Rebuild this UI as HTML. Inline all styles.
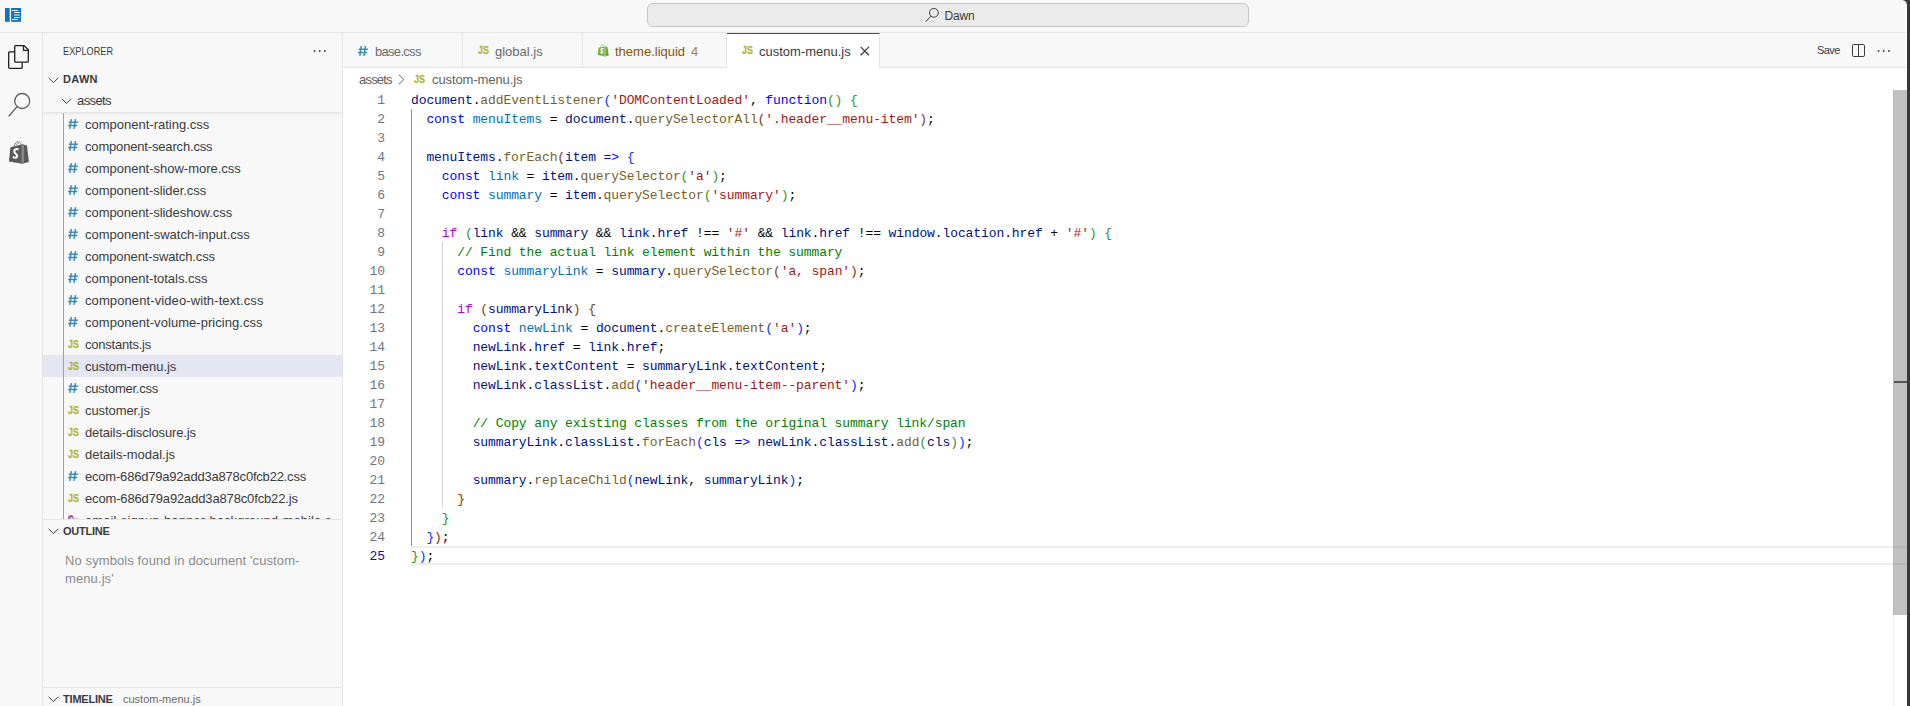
<!DOCTYPE html>
<html><head><meta charset="utf-8"><title>Dawn</title>
<style>
*{box-sizing:border-box;margin:0;padding:0}
html,body{width:1910px;height:706px;overflow:hidden;background:#f8f8f8}
body{position:relative;font-family:"Liberation Sans",sans-serif;font-size:13px;color:#3b3b3b}
.abs{position:absolute}
/* title bar */
#title{position:absolute;left:0;top:0;width:1907px;height:33px;border-bottom:1px solid #e5e5e5;background:#f8f8f8}
#cc{position:absolute;left:647px;top:3px;width:602px;height:24px;border:1px solid #c6c6c6;border-radius:6px;background:#ebebeb}
#cc .t{position:absolute;left:296.4px;top:0;line-height:24px;font-size:12px;color:#3b3b3b;letter-spacing:-0.1px}
#strip{position:absolute;left:1907px;top:0;width:3px;height:706px;background:#383838}
/* activity bar */
#act{position:absolute;left:0;top:33px;width:43px;height:673px;border-right:1px solid #e5e5e5;background:#f8f8f8}
/* sidebar */
#side{position:absolute;left:43px;top:33px;width:300px;height:673px;border-right:1px solid #e5e5e5;background:#f8f8f8;overflow:hidden}
#side .hd{position:absolute;left:20px;top:1px;line-height:35px;font-size:11px;color:#3b3b3b}
.sect{position:absolute;left:0;width:299px;height:22px;line-height:22px;font-size:11px;font-weight:bold;color:#3b3b3b}
.sect .lbl{position:absolute;left:20px;top:1px}
.row{position:absolute;left:0;width:299px;height:22px;line-height:22px;white-space:nowrap}
.row.sel{background:#e4e6f1}
.row .fn{position:absolute;left:42px;top:1px;color:#3b3b3b}
.fi{position:absolute;left:25.2px;top:6px;width:10px;height:10px}
.fjs{position:absolute;left:24.5px;top:0;font-size:11.2px;font-weight:bold;color:#b5b53a;-webkit-text-stroke:0.3px #b5b53a;transform:scaleX(.8);transform-origin:0 50%}
#guide{z-index:3;position:absolute;left:20px;top:80px;width:1px;height:406px;background:#a2a2a2}
/* editor */
#ed{position:absolute;left:343px;top:33px;width:1564px;height:673px;background:#fff}
#tabs{position:absolute;left:0;top:0;width:1564px;height:35px;background:#f8f8f8;border-bottom:1px solid #e5e5e5}
.tab{position:absolute;top:0;height:35px;border-right:1px solid #e5e5e5;line-height:35px;color:#6b6b6b;white-space:nowrap}
.tab.on{background:#fff;border-top:1px solid #005fb8;color:#3b3b3b;height:35px;line-height:33px}
.tab .tx{position:absolute;top:1px}
.tab .fi{left:15.3px;top:13px}
.tab .fjs{left:15px}
.fshop{position:absolute;left:13.6px;top:11.2px;width:12.6px;height:13px}
#bc{position:absolute;left:0;top:35px;width:1564px;height:22px;line-height:22px;color:#616161;background:#fff}
/* code */
.ln{position:absolute;left:411px;height:19px;line-height:19px;white-space:pre;font-family:"Liberation Mono",monospace;font-size:13px;letter-spacing:-0.1px;color:#000;padding-top:1px}
.num{position:absolute;left:343px;width:42px;text-align:right;height:19px;line-height:19px;font-family:"Liberation Mono",monospace;font-size:13px;letter-spacing:-0.1px;color:#6e7681;padding-top:1px}
.num.act{color:#171184}
.v{color:#001080}.f{color:#795e26}.s{color:#a31515}.k{color:#0000ff}.c{color:#0070c1}.kc{color:#af00db}.cm{color:#008000}
.b1{color:#0431fa}.b2{color:#319331}.b3{color:#7b3814}
.ig{position:absolute;width:1px;background:#d3d3d3}
</style></head>
<body>
<div id="title">
  <svg class="abs" style="left:5px;top:8px" width="16" height="14" viewBox="0 0 16 14"><rect x="0" y="0" width="4.7" height="13.8" fill="#1272bf"/><rect x="6.1" y="0" width="9.9" height="13.8" fill="#1272bf"/><path d="M7.1 2.5h5.8M9.1 4.5h5.7M9.1 9.5h5.7M7.1 11.5h5.8" stroke="#fff" stroke-width="1"/><rect x="9.1" y="6.1" width="5.7" height="1.8" fill="#8fc0e6"/></svg>
  <div id="cc">
    <svg class="abs" style="left:276px;top:3px" width="16" height="16" viewBox="0 0 16 16"><circle cx="9.9" cy="5.8" r="4.4" fill="none" stroke="#3b3b3b" stroke-width="1"/><path d="M6.8 9.2 1.7 14.8" stroke="#3b3b3b" stroke-width="1"/></svg>
    <div class="t">Dawn</div>
  </div>
</div>
<div id="strip"></div>
<div class="abs" style="left:1906px;top:4px;width:1px;height:86px;background:#fff;z-index:5"></div>
<div class="abs" style="left:1903px;top:0;width:4px;height:4px;z-index:6;background:radial-gradient(circle at 0 100%,rgba(56,56,56,0) 3.2px,#383838 4px)"></div>

<div id="act">
  <svg class="abs" style="left:0;top:0" width="42" height="150" viewBox="0 33 42 150">
    <g fill="none" stroke="#1f1f1f" stroke-width="1.3" stroke-linejoin="round">
      <path d="M15.6 45.6H24.2L28.3 49.8V61.3a.9.9 0 0 1-.9.9H15.6a.9.9 0 0 1-.9-.9V46.5a.9.9 0 0 1 .9-.9z"/>
      <path d="M23.5 45.8V50.3H28.2"/>
      <path d="M14.6 51.8H9.6a.9.9 0 0 0-.9.9V67.4a.9.9 0 0 0 .9.9H21.3a.9.9 0 0 0 .9-.9V62.4"/>
    </g>
    <g fill="none" stroke="#616161" stroke-width="1.3">
      <circle cx="22.2" cy="101" r="7.5"/>
      <path d="M17 106.7 8.7 116.3"/>
    </g>
    <g>
      <path d="M10.4 147.2 22.2 144.2 22.2 163.8 9 161.4z" fill="#5a5a5a"/>
      <path d="M22.2 144.2 27 145.4 28.9 162 22.2 163.8z" fill="#5a5a5a"/>
      <rect x="21.6" y="144.4" width="2.3" height="19.2" fill="#8a8a8a"/>
      <path d="M14.2 146.4C14.8 143.4 16.4 141.5 18 141.7 19.7 141.9 21 143.4 21.3 144.6" stroke="#707070" stroke-width="0.9" fill="none"/>
      <path d="M16.2 145.8C16.7 143.9 17.7 143 18.9 143.5" stroke="#808080" stroke-width="0.8" fill="none"/>
      <path d="M18.6 149.6C17 148.6 14.4 149 14.2 151.2 14 153.6 17.4 153.8 17.2 156.2 17 158.2 14.6 158 12.8 156.8" stroke="#fff" stroke-width="2.1" fill="none"/>
    </g>
  </svg>
</div>

<div id="side">
  <div class="hd" style="transform:scaleX(.835);transform-origin:0 50%">EXPLORER</div>
  <svg class="abs" style="left:270px;top:16px" width="14" height="4" viewBox="0 0 14 4"><rect x="0.7" y="1.2" width="1.6" height="1.6" fill="#2b2b2b"/><rect x="5.9" y="1.2" width="1.6" height="1.6" fill="#2b2b2b"/><rect x="11.1" y="1.2" width="1.6" height="1.6" fill="#2b2b2b"/></svg>
  <div id="list" class="abs" style="left:0;top:0;width:299px;height:486px;overflow:hidden">
    <div id="guide"></div>
<div class="row" style="top:80px"><svg class="fi" viewBox="0 0 10 10"><path d="M3.3 0.2 1.8 9.8M7.5 0.2 6 9.8M0.8 3.3h9.1M0.1 6.4h9.1" stroke="#3f8db3" stroke-width="1.55" fill="none"/></svg><span class="fn" style="letter-spacing:0.001px">component-rating.css</span></div>
<div class="row" style="top:102px"><svg class="fi" viewBox="0 0 10 10"><path d="M3.3 0.2 1.8 9.8M7.5 0.2 6 9.8M0.8 3.3h9.1M0.1 6.4h9.1" stroke="#3f8db3" stroke-width="1.55" fill="none"/></svg><span class="fn" style="letter-spacing:-0.169px">component-search.css</span></div>
<div class="row" style="top:124px"><svg class="fi" viewBox="0 0 10 10"><path d="M3.3 0.2 1.8 9.8M7.5 0.2 6 9.8M0.8 3.3h9.1M0.1 6.4h9.1" stroke="#3f8db3" stroke-width="1.55" fill="none"/></svg><span class="fn" style="letter-spacing:-0.011px">component-show-more.css</span></div>
<div class="row" style="top:146px"><svg class="fi" viewBox="0 0 10 10"><path d="M3.3 0.2 1.8 9.8M7.5 0.2 6 9.8M0.8 3.3h9.1M0.1 6.4h9.1" stroke="#3f8db3" stroke-width="1.55" fill="none"/></svg><span class="fn" style="letter-spacing:-0.046px">component-slider.css</span></div>
<div class="row" style="top:168px"><svg class="fi" viewBox="0 0 10 10"><path d="M3.3 0.2 1.8 9.8M7.5 0.2 6 9.8M0.8 3.3h9.1M0.1 6.4h9.1" stroke="#3f8db3" stroke-width="1.55" fill="none"/></svg><span class="fn" style="letter-spacing:-0.045px">component-slideshow.css</span></div>
<div class="row" style="top:190px"><svg class="fi" viewBox="0 0 10 10"><path d="M3.3 0.2 1.8 9.8M7.5 0.2 6 9.8M0.8 3.3h9.1M0.1 6.4h9.1" stroke="#3f8db3" stroke-width="1.55" fill="none"/></svg><span class="fn" style="letter-spacing:0.002px">component-swatch-input.css</span></div>
<div class="row" style="top:212px"><svg class="fi" viewBox="0 0 10 10"><path d="M3.3 0.2 1.8 9.8M7.5 0.2 6 9.8M0.8 3.3h9.1M0.1 6.4h9.1" stroke="#3f8db3" stroke-width="1.55" fill="none"/></svg><span class="fn" style="letter-spacing:-0.112px">component-swatch.css</span></div>
<div class="row" style="top:234px"><svg class="fi" viewBox="0 0 10 10"><path d="M3.3 0.2 1.8 9.8M7.5 0.2 6 9.8M0.8 3.3h9.1M0.1 6.4h9.1" stroke="#3f8db3" stroke-width="1.55" fill="none"/></svg><span class="fn" style="letter-spacing:-0.022px">component-totals.css</span></div>
<div class="row" style="top:256px"><svg class="fi" viewBox="0 0 10 10"><path d="M3.3 0.2 1.8 9.8M7.5 0.2 6 9.8M0.8 3.3h9.1M0.1 6.4h9.1" stroke="#3f8db3" stroke-width="1.55" fill="none"/></svg><span class="fn" style="letter-spacing:0.101px">component-video-with-text.css</span></div>
<div class="row" style="top:278px"><svg class="fi" viewBox="0 0 10 10"><path d="M3.3 0.2 1.8 9.8M7.5 0.2 6 9.8M0.8 3.3h9.1M0.1 6.4h9.1" stroke="#3f8db3" stroke-width="1.55" fill="none"/></svg><span class="fn" style="letter-spacing:0.047px">component-volume-pricing.css</span></div>
<div class="row" style="top:300px"><span class="fjs">JS</span><span class="fn" style="letter-spacing:-0.221px">constants.js</span></div>
<div class="row sel" style="top:322px"><span class="fjs">JS</span><span class="fn" style="letter-spacing:-0.032px">custom-menu.js</span></div>
<div class="row" style="top:344px"><svg class="fi" viewBox="0 0 10 10"><path d="M3.3 0.2 1.8 9.8M7.5 0.2 6 9.8M0.8 3.3h9.1M0.1 6.4h9.1" stroke="#3f8db3" stroke-width="1.55" fill="none"/></svg><span class="fn" style="letter-spacing:-0.238px">customer.css</span></div>
<div class="row" style="top:366px"><span class="fjs">JS</span><span class="fn" style="letter-spacing:-0.086px">customer.js</span></div>
<div class="row" style="top:388px"><span class="fjs">JS</span><span class="fn" style="letter-spacing:-0.116px">details-disclosure.js</span></div>
<div class="row" style="top:410px"><span class="fjs">JS</span><span class="fn" style="letter-spacing:-0.021px">details-modal.js</span></div>
<div class="row" style="top:432px"><svg class="fi" viewBox="0 0 10 10"><path d="M3.3 0.2 1.8 9.8M7.5 0.2 6 9.8M0.8 3.3h9.1M0.1 6.4h9.1" stroke="#3f8db3" stroke-width="1.55" fill="none"/></svg><span class="fn ecom" style="letter-spacing:-0.202px">ecom-686d79a92add3a878c0fcb22.css</span></div>
<div class="row" style="top:454px"><span class="fjs">JS</span><span class="fn ecom" style="letter-spacing:-0.149px">ecom-686d79a92add3a878c0fcb22.js</span></div>
<div class="row" style="top:476px"><svg class="fi" viewBox="0 0 12 12"><rect x="4.5" y="3.2" width="7.6" height="4" fill="#d9c3e6"/><circle cx="3.4" cy="3.4" r="3.3" fill="#9a5cc0"/><circle cx="4.2" cy="4.6" r="1.6" fill="#f8f8f8"/></svg><span class="fn" style="letter-spacing:0.077px">email-signup-banner-background-mobile.s</span></div>
  </div>
  <!-- sticky headers -->
  <div class="sect" style="top:35px;background:#f8f8f8">
    <svg class="abs" style="left:5px;top:9px" width="11" height="7" viewBox="0 0 11 7"><path d="M0.7 0.8 5.5 5.6 10.3 0.8" fill="none" stroke="#3b3b3b" stroke-width="1"/></svg>
    <span class="lbl" style="top:0;letter-spacing:0.3px">DAWN</span>
  </div>
  <div class="row" style="top:57px;background:#f8f8f8;box-shadow:0 2px 3px -1px rgba(0,0,0,.12)">
    <svg class="abs" style="left:18px;top:8px" width="11" height="7" viewBox="0 0 11 7"><path d="M0.7 0.8 5.5 5.6 10.3 0.8" fill="none" stroke="#3b3b3b" stroke-width="1"/></svg>
    <span class="abs" style="left:34px;top:0;letter-spacing:-0.6px">assets</span>
  </div>
  <div class="sect" style="top:486px;height:23px;border-top:1px solid #e5e5e5;background:#f8f8f8">
    <svg class="abs" style="left:5px;top:8px" width="11" height="7" viewBox="0 0 11 7"><path d="M0.7 0.8 5.5 5.6 10.3 0.8" fill="none" stroke="#3b3b3b" stroke-width="1"/></svg>
    <span class="lbl" style="top:0;letter-spacing:-0.25px">OUTLINE</span>
  </div>
  <div class="abs" style="left:22px;top:519px;width:250px;line-height:18px;color:#8b8b8b;letter-spacing:0.1px">No symbols found in document 'custom-<br>menu.js'</div>
  <div class="sect" style="top:654px;height:23px;border-top:1px solid #e5e5e5;background:#f8f8f8">
    <svg class="abs" style="left:5px;top:8px" width="11" height="7" viewBox="0 0 11 7"><path d="M0.7 0.8 5.5 5.6 10.3 0.8" fill="none" stroke="#3b3b3b" stroke-width="1"/></svg>
    <span class="lbl" style="top:0;letter-spacing:-0.2px">TIMELINE</span>
    <span class="abs" style="left:80px;top:0;font-weight:normal;color:#6b6b6b">custom-menu.js</span>
  </div>
</div>

<div id="ed">
  <div id="tabs">
    <div class="tab" style="left:0;width:120px"><svg class="fi" viewBox="0 0 10 10"><path d="M3.3 0.2 1.8 9.8M7.5 0.2 6 9.8M0.8 3.3h9.1M0.1 6.4h9.1" stroke="#3f8db3" stroke-width="1.55" fill="none"/></svg><span class="tx" style="left:32px;letter-spacing:-0.7px">base.css</span></div>
    <div class="tab" style="left:120px;width:120px"><span class="fjs">JS</span><span class="tx" style="left:32px">global.js</span></div>
    <div class="tab" style="left:240px;width:144px;color:#895503"><svg class="fshop" viewBox="0 0 14 15"><path d="M1.6 4.2 9.2 2.6 9.2 14.4 0.4 12.8z" fill="#7db343"/><path d="M9.2 2.6 11.6 3.3 13.4 13.4 9.2 14.4z" fill="#6aa23c"/><path d="M8.9 2.8v11.5" stroke="#d8ecc0" stroke-width="0.7"/><path d="M3.6 3.9C3.9 2 4.9 0.9 6 0.9 7 0.9 7.6 1.9 7.7 3.1" stroke="#8cc152" stroke-width="0.9" fill="none"/><path d="M7.4 5.6C6.3 5 4.5 5.2 4.4 6.7 4.3 8.2 6.5 8.2 6.4 9.7 6.3 10.8 4.8 10.7 3.7 9.9" stroke="#fff" stroke-width="1.5" fill="none"/></svg><span class="tx" style="left:32px">theme.liquid</span><span class="tx" style="left:108px;opacity:.75">4</span></div>
    <div class="tab on" style="left:384px;width:153px"><span class="fjs">JS</span><span class="tx" style="left:32px">custom-menu.js</span>
      <svg class="abs" style="left:133px;top:12px" width="10" height="10" viewBox="0 0 10 10"><path d="M0.6 0.9 9 9.3M9 0.9 0.6 9.3" stroke="#3b3b3b" stroke-width="1.25"/></svg>
    </div>
    <div class="abs" style="left:1474px;top:0;line-height:35px;font-size:11px;color:#3b3b3b;letter-spacing:-0.6px">Save</div>
    <svg class="abs" style="left:1509px;top:11px" width="13" height="13" viewBox="0 0 13 13"><rect x="0.5" y="0.5" width="12" height="12" rx="1.3" fill="none" stroke="#3b3b3b" stroke-width="1"/><path d="M6.5 0.5v12" stroke="#3b3b3b" stroke-width="1"/></svg>
    <svg class="abs" style="left:1534px;top:16px" width="14" height="4" viewBox="0 0 14 4"><rect x="0.7" y="1.2" width="1.6" height="1.6" fill="#2b2b2b"/><rect x="5.9" y="1.2" width="1.6" height="1.6" fill="#2b2b2b"/><rect x="11.1" y="1.2" width="1.6" height="1.6" fill="#2b2b2b"/></svg>
  </div>
  <div id="bc">
    <span class="abs" style="left:16px;top:1px;letter-spacing:-0.8px">assets</span>
    <svg class="abs" style="left:55px;top:6px" width="7" height="11" viewBox="0 0 7 11"><path d="M1 0.8 5.8 5.5 1 10.2" fill="none" stroke="#616161" stroke-width="1"/></svg>
    <span class="fjs" style="left:71px">JS</span>
    <span class="abs" style="left:89px;top:1px;letter-spacing:-0.1px">custom-menu.js</span>
  </div>
</div>

<!-- code area: absolute page coords -->
<div class="abs" style="left:411px;top:546px;width:1496px;height:19px;border:2px solid #eee;border-left-width:1px;border-right:0"></div>
<div class="ig" style="left:411px;top:109px;height:437px;background:#939393"></div>
<div class="ig" style="left:442px;top:242px;height:266px"></div>
<div class="num" style="top:90px">1</div>
<div class="num" style="top:109px">2</div>
<div class="num" style="top:128px">3</div>
<div class="num" style="top:147px">4</div>
<div class="num" style="top:166px">5</div>
<div class="num" style="top:185px">6</div>
<div class="num" style="top:204px">7</div>
<div class="num" style="top:223px">8</div>
<div class="num" style="top:242px">9</div>
<div class="num" style="top:261px">10</div>
<div class="num" style="top:280px">11</div>
<div class="num" style="top:299px">12</div>
<div class="num" style="top:318px">13</div>
<div class="num" style="top:337px">14</div>
<div class="num" style="top:356px">15</div>
<div class="num" style="top:375px">16</div>
<div class="num" style="top:394px">17</div>
<div class="num" style="top:413px">18</div>
<div class="num" style="top:432px">19</div>
<div class="num" style="top:451px">20</div>
<div class="num" style="top:470px">21</div>
<div class="num" style="top:489px">22</div>
<div class="num" style="top:508px">23</div>
<div class="num" style="top:527px">24</div>
<div class="num act" style="top:546px">25</div>
<div class="ln" style="top:90px"><span class="v">document</span>.<span class="f">addEventListener</span><span class="b1">(</span><span class="s">&#x27;DOMContentLoaded&#x27;</span>, <span class="k">function</span><span class="b2">()</span> <span class="b2">{</span></div>
<div class="ln" style="top:109px">  <span class="k">const</span> <span class="c">menuItems</span> = <span class="v">document</span>.<span class="f">querySelectorAll</span><span class="b3">(</span><span class="s">&#x27;.header__menu-item&#x27;</span><span class="b3">)</span>;</div>
<div class="ln" style="top:128px"></div>
<div class="ln" style="top:147px">  <span class="v">menuItems</span>.<span class="f">forEach</span><span class="b3">(</span><span class="v">item</span> <span class="k">=&gt;</span> <span class="b1">{</span></div>
<div class="ln" style="top:166px">    <span class="k">const</span> <span class="c">link</span> = <span class="v">item</span>.<span class="f">querySelector</span><span class="b2">(</span><span class="s">&#x27;a&#x27;</span><span class="b2">)</span>;</div>
<div class="ln" style="top:185px">    <span class="k">const</span> <span class="c">summary</span> = <span class="v">item</span>.<span class="f">querySelector</span><span class="b2">(</span><span class="s">&#x27;summary&#x27;</span><span class="b2">)</span>;</div>
<div class="ln" style="top:204px"></div>
<div class="ln" style="top:223px">    <span class="kc">if</span> <span class="b2">(</span><span class="v">link</span> &amp;&amp; <span class="v">summary</span> &amp;&amp; <span class="v">link</span>.<span class="v">href</span> !== <span class="s">&#x27;#&#x27;</span> &amp;&amp; <span class="v">link</span>.<span class="v">href</span> !== <span class="v">window</span>.<span class="v">location</span>.<span class="v">href</span> + <span class="s">&#x27;#&#x27;</span><span class="b2">)</span> <span class="b2">{</span></div>
<div class="ln" style="top:242px">      <span class="cm">// Find the actual link element within the summary</span></div>
<div class="ln" style="top:261px">      <span class="k">const</span> <span class="c">summaryLink</span> = <span class="v">summary</span>.<span class="f">querySelector</span><span class="b3">(</span><span class="s">&#x27;a, span&#x27;</span><span class="b3">)</span>;</div>
<div class="ln" style="top:280px"></div>
<div class="ln" style="top:299px">      <span class="kc">if</span> <span class="b3">(</span><span class="v">summaryLink</span><span class="b3">)</span> <span class="b3">{</span></div>
<div class="ln" style="top:318px">        <span class="k">const</span> <span class="c">newLink</span> = <span class="v">document</span>.<span class="f">createElement</span><span class="b1">(</span><span class="s">&#x27;a&#x27;</span><span class="b1">)</span>;</div>
<div class="ln" style="top:337px">        <span class="v">newLink</span>.<span class="v">href</span> = <span class="v">link</span>.<span class="v">href</span>;</div>
<div class="ln" style="top:356px">        <span class="v">newLink</span>.<span class="v">textContent</span> = <span class="v">summaryLink</span>.<span class="v">textContent</span>;</div>
<div class="ln" style="top:375px">        <span class="v">newLink</span>.<span class="v">classList</span>.<span class="f">add</span><span class="b1">(</span><span class="s">&#x27;header__menu-item--parent&#x27;</span><span class="b1">)</span>;</div>
<div class="ln" style="top:394px"></div>
<div class="ln" style="top:413px">        <span class="cm">// Copy any existing classes from the original summary link/span</span></div>
<div class="ln" style="top:432px">        <span class="v">summaryLink</span>.<span class="v">classList</span>.<span class="f">forEach</span><span class="b1">(</span><span class="v">cls</span> <span class="k">=&gt;</span> <span class="v">newLink</span>.<span class="v">classList</span>.<span class="f">add</span><span class="b2">(</span><span class="v">cls</span><span class="b2">)</span><span class="b1">)</span>;</div>
<div class="ln" style="top:451px"></div>
<div class="ln" style="top:470px">        <span class="v">summary</span>.<span class="f">replaceChild</span><span class="b1">(</span><span class="v">newLink</span>, <span class="v">summaryLink</span><span class="b1">)</span>;</div>
<div class="ln" style="top:489px">      <span class="b3">}</span></div>
<div class="ln" style="top:508px">    <span class="b2">}</span></div>
<div class="ln" style="top:527px">  <span class="b1">}</span><span class="b3">)</span>;</div>
<div class="ln" style="top:546px"><span class="b2">}</span><span class="b1">)</span>;</div>
<!-- scrollbar -->
<div class="abs" style="left:1893px;top:90px;width:14px;height:616px;border-left:1px solid #f0f0f0"></div>
<div class="abs" style="left:1893px;top:90px;width:14px;height:525px;background:rgba(100,100,100,.4)"></div>
<div class="abs" style="left:1894px;top:381px;width:13px;height:2px;background:#555"></div>
</body></html>
